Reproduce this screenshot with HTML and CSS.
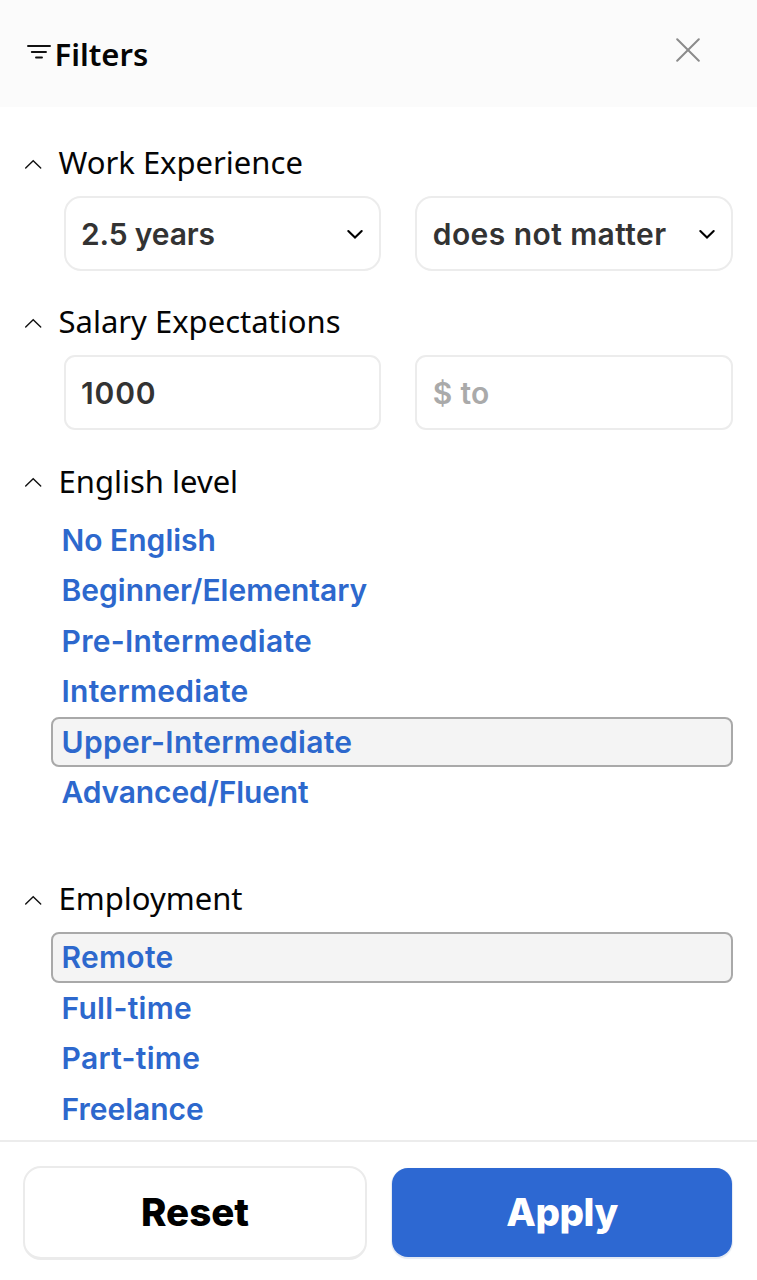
FILE: index.html
```html
<!DOCTYPE html>
<html lang="en">
<head>
<meta charset="utf-8">
<title>Filters</title>
<link rel="stylesheet" href="styles.css">
</head>
<body>
<div class="panel">
  <header class="header">
    <svg class="filter-icon" width="24" height="16" viewBox="0 0 24 16"><path d="M1 2H23M4.8 8H19M9 13.5H15"/></svg>
    <h1 class="title">Filters</h1>
    <button class="close" aria-label="Close"><svg width="24" height="24" viewBox="0 0 24 24"><path d="M1.2 1.2L22.8 22.8M22.8 1.2L1.2 22.8"/></svg></button>
  </header>
  <main class="content">
    <section class="section">
      <h2 class="heading"><svg class="caret" width="18" height="10" viewBox="0 0 18 10"><path d="M1.7 9L9.2 1.7L16.7 9"/></svg><span>Work Experience</span></h2>
      <div class="fields">
        <div class="field select"><span class="tight">2.5 years</span><svg width="18" height="11" viewBox="0 0 18 11"><path d="M2.3 2L9 8.6L15.7 2"/></svg></div>
        <div class="field select"><span class="looser">does not matter</span><svg width="18" height="11" viewBox="0 0 18 11"><path d="M2.3 2L9 8.6L15.7 2"/></svg></div>
      </div>
    </section>
    <section class="section">
      <h2 class="heading"><svg class="caret" width="18" height="10" viewBox="0 0 18 10"><path d="M1.7 9L9.2 1.7L16.7 9"/></svg><span>Salary Expectations</span></h2>
      <div class="fields">
        <div class="field input"><span class="number">1000</span></div>
        <div class="field input placeholder"><span class="loose">$ to</span></div>
      </div>
    </section>
    <section class="section english">
      <h2 class="heading"><svg class="caret" width="18" height="10" viewBox="0 0 18 10"><path d="M1.7 9L9.2 1.7L16.7 9"/></svg><span>English level</span></h2>
      <ul class="options">
        <li><span>No English</span></li>
        <li><span>Beginner/Elementary</span></li>
        <li><span class="loose">Pre-Intermediate</span></li>
        <li><span class="loose">Intermediate</span></li>
        <li class="selected"><span class="loose">Upper-Intermediate</span></li>
        <li><span class="tight">Advanced/Fluent</span></li>
      </ul>
    </section>
    <section class="section">
      <h2 class="heading"><svg class="caret" width="18" height="10" viewBox="0 0 18 10"><path d="M1.7 9L9.2 1.7L16.7 9"/></svg><span>Employment</span></h2>
      <ul class="options">
        <li class="selected"><span class="loose">Remote</span></li>
        <li><span class="loose">Full-time</span></li>
        <li><span class="loose">Part-time</span></li>
        <li><span>Freelance</span></li>
      </ul>
    </section>
  </main>
  <footer class="footer">
    <button class="button reset">Reset</button>
    <button class="button apply">Apply</button>
  </footer>
</div>
</body>
</html>
```
FILE: styles.css
```css
* { box-sizing: border-box; }
body { margin: 0; background: #fff; color: #050505; font-family: "Noto Sans", sans-serif; }
h1, h2, ul { margin: 0; padding: 0; }
svg { display: block; flex: none; fill: none; stroke: #111; stroke-linecap: round; }
button { font-family: Inter, sans-serif; }
.panel { height: 1280px; display: flex; flex-direction: column; overflow: hidden; }
.header { height: 107px; flex: none; background: #fbfbfb; display: flex; align-items: center; padding: 0 57px 0 27px; }
.filter-icon { margin: 0 3.5px 3px 0; stroke-width: 1.9; }
.title { font-size: 31px; line-height: 40px; font-weight: 600; }
.close { margin: 0 0 7px auto; padding: 0; border: 0; background: none; }
.close svg { stroke: #8b8b8b; stroke-width: 2; }
.content { flex: 1; min-height: 0; padding: 33px 24px 0 24px; }
.section { height: 159.4px; }
.section.english { height: 417.5px; }
.heading { height: 46px; display: flex; align-items: center; font-size: 31px; line-height: 44px; font-weight: 400; white-space: nowrap; }
.heading span { margin-left: -0.5px; padding-bottom: 2px; }
.caret { margin: 1px 17px 0 0; stroke-width: 1.4; }
.fields { display: flex; gap: 34px; padding: 10px 0 0 39.5px; }
.field { flex: 1; min-width: 0; height: 75px; border: 2px solid #ececec; border-radius: 17px; padding: 0 15px 0 15.5px; display: flex; align-items: center; justify-content: space-between; font: 600 30px/40px Inter, sans-serif; color: #333; white-space: nowrap; }
.field svg { stroke: #000; stroke-width: 2.1; margin-top: 2px; }
.input { border-radius: 11px; }
.placeholder { color: #aaa; }
.tight { letter-spacing: -0.14px; }
.loose { letter-spacing: 0.3px; }
.looser { letter-spacing: 0.43px; }
.number { letter-spacing: 0.85px; }
.options { list-style: none; margin-left: 27px; padding-top: 9.8px; }
.options li { height: 50.5px; display: flex; align-items: center; border: 2px solid transparent; border-radius: 8px; padding-left: 8.5px; color: #2d68cd; font: 600 30px/40px Inter, sans-serif; }
.options .selected { background: #f4f4f4; border-color: #a9a9a9; }
.footer { height: 140px; flex: none; background: #fff; border-top: 2px solid #ececec; padding: 24px 25px 0 23px; display: flex; gap: 24px; }
.button { height: 94px; flex: none; width: 344px; border: 2px solid #ebebeb; border-bottom-width: 3px; border-radius: 18px; background: #fff; color: #000; padding: 0 0 1px; font-size: 38.5px; font-weight: 800; }
.apply { width: auto; flex: 1; margin-left: 1px; height: 89px; margin-top: 2px; border: 0; border-radius: 16px; background: #2d68d2; color: #fff; box-shadow: 0 1px 1px 1px #e3e9f3; letter-spacing: -0.5px; }
```
